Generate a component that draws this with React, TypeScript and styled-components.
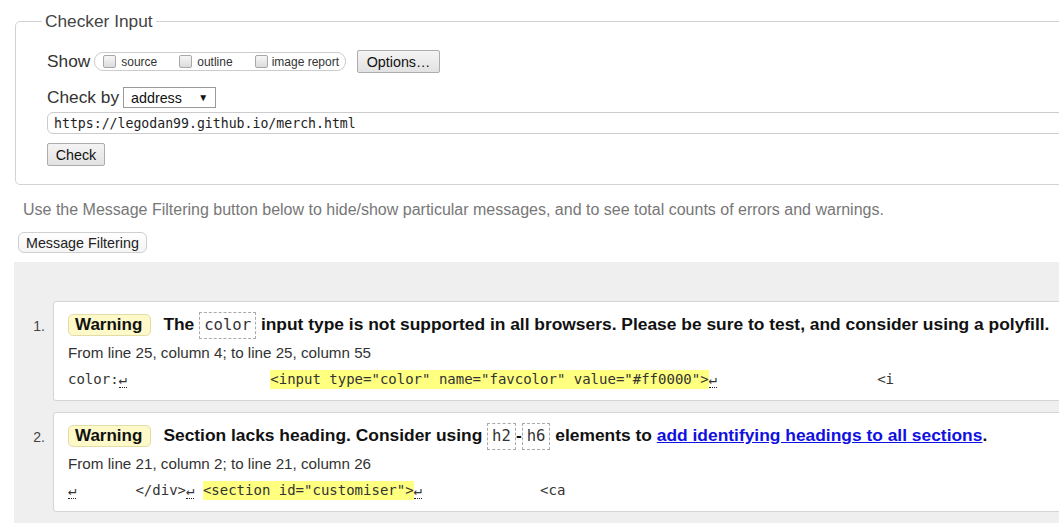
import React from 'react';
import styled, { createGlobalStyle } from 'styled-components';

const Global = createGlobalStyle`
  html, body { margin: 0; padding: 0; background: #fff; overflow: hidden; }
  body { font-family: "Liberation Sans", Arial, sans-serif; color: #222; }
  * { box-sizing: border-box; }
`;

const Page = styled.div`
  width: 1120px;
  padding: 11px 0 0 14px;
`;

const Fieldset = styled.fieldset`
  margin: 0 0 0 1px;
  padding: 19px 0 18px 31px;
  border: 1px solid #d2d2d2;
  border-radius: 5px;
  min-width: 0;
`;

const Legend = styled.legend`
  margin-left: -5px;
  padding: 0 3px;
  font-size: 17.3px;
  line-height: 20px;
  color: #444;
`;

const Row = styled.div<{ $top?: number; $h: number }>`
  display: flex;
  align-items: center;
  height: ${(p) => p.$h}px;
  margin-top: ${(p) => p.$top ?? 0}px;
  font-size: 17.3px;
  color: #333;
`;

const RowLabel = styled.span`
  margin-right: 4px;
`;

const ShowGroup = styled.div`
  display: flex;
  align-items: center;
  height: 19px;
  border: 1px solid #ccc;
  border-radius: 9px;
  padding: 0 6px 0 8px;
  font-size: 12px;
  color: #333;
`;

const CheckItem = styled.label`
  display: flex;
  align-items: flex-end;
  gap: 5px;
  margin-right: 22px;
  &:last-child { margin-right: 0; gap: 4px; }
`;

const Box = styled.input`
  appearance: none;
  margin: 0;
  width: 13px;
  height: 13px;
  border: 1px solid #a8a8a8;
  border-radius: 2px;
  background: linear-gradient(#f6f6f6, #dcdcdc);
`;

const CheckText = styled.span`
  line-height: 12px;
`;

const Button = styled.button<{ $w: number; $h: number; $top?: number }>`
  display: block;
  width: ${(p) => p.$w}px;
  height: ${(p) => p.$h}px;
  margin: ${(p) => p.$top ?? 0}px 0 0 0;
  padding: 0;
  font-family: "Liberation Sans", Arial, sans-serif;
  font-size: 14.3px;
  color: #111;
  border: 1px solid #adadad;
  border-radius: 2px;
  background: linear-gradient(#f4f4f4, #e2e2e2);
`;

const OptionsButton = styled(Button)`
  margin-left: 11px;
`;

const Select = styled.div`
  display: flex;
  align-items: center;
  justify-content: space-between;
  width: 93px;
  height: 21px;
  padding: 0 7px 0 7px;
  border: 1px solid #999;
  background: #fff;
  font-size: 14.3px;
  color: #111;
`;

const Arrow = styled.span`
  font-size: 10px;
  color: #111;
`;

const UrlInput = styled.input`
  display: block;
  width: 100%;
  height: 22px;
  margin-top: 4px;
  padding: 0 6px;
  border: 1px solid #ccc;
  border-radius: 6px;
  font-family: "DejaVu Sans Mono", monospace;
  font-size: 13.2px;
  color: #222;
  background: #fff;
  outline: none;
`;

const Intro = styled.p`
  margin: 15px 0 0 9px;
  font-size: 16px;
  line-height: 20px;
  color: #777;
`;

const FilterButton = styled.button`
  display: block;
  height: 21px;
  margin: 12px 0 0 4px;
  padding: 0 7px;
  border: 1px solid #cfcfcf;
  border-radius: 6px;
  background: linear-gradient(#ffffff, #f4f4f4);
  font-family: "Liberation Sans", Arial, sans-serif;
  font-size: 14.3px;
  color: #222;
`;

const Results = styled.ol`
  list-style: none;
  margin: 9px 0 0 0;
  padding: 39px 0 11px 0;
  background: #efefef;
`;

const Item = styled.li`
  display: flex;
  & + & { margin-top: 11px; }
`;

const Num = styled.span`
  flex: 0 0 39px;
  padding: 17px 8px 0 0;
  text-align: right;
  font-size: 14px;
  line-height: 16px;
  color: #444;
`;

const Card = styled.div`
  flex: 1;
  background: #fff;
  border: 1px solid #d4d4d4;
  border-radius: 3px;
  padding: 8px 14px 11px;
`;

const Headline = styled.div`
  height: 28px;
  line-height: 28px;
  white-space: nowrap;
  font-size: 17.4px;
  font-weight: bold;
  color: #111;
`;

const Badge = styled.span`
  display: inline-block;
  vertical-align: middle;
  height: 22px;
  line-height: 20px;
  padding: 0 8px 0 6px;
  margin-right: 12px;
  border: 1px solid #e4dca6;
  border-radius: 5px;
  background: #fdf9c8;
  font-size: 17px;
`;

const CodeBox = styled.code`
  display: inline-block;
  vertical-align: middle;
  height: 27px;
  line-height: 25px;
  padding: 0 4px;
  border: 1px dashed #aaa;
  font-family: "DejaVu Sans Mono", monospace;
  font-size: 15.6px;
  font-weight: normal;
  color: #333;
`;

const Link = styled.a`
  color: #1010e0;
  text-decoration: underline;
`;

const Location = styled.div`
  margin-top: 6px;
  font-size: 15.2px;
  line-height: 18px;
  color: #333;
  white-space: nowrap;
`;

const Extract = styled.div`
  margin-top: 8px;
  height: 19px;
  font-family: "DejaVu Sans Mono", monospace;
  font-size: 14px;
  line-height: 19px;
  white-space: pre;
  color: #333;
`;

const Mark = styled.mark`
  display: inline-block;
  line-height: 19px;
  background: #ffff80;
  color: #333;
`;

const Ret = styled.span`
  display: inline-block;
  line-height: 15px;
  border-bottom: 1px dotted #222;
`;

export default function App() {
  return (
    <>
      <Global />
      <Page>
        <Fieldset>
          <Legend>Checker Input</Legend>
          <Row $h={23}>
            <RowLabel>Show</RowLabel>
            <ShowGroup>
              <CheckItem>
                <Box type="checkbox" />
                <CheckText>source</CheckText>
              </CheckItem>
              <CheckItem>
                <Box type="checkbox" />
                <CheckText>outline</CheckText>
              </CheckItem>
              <CheckItem>
                <Box type="checkbox" />
                <CheckText>image report</CheckText>
              </CheckItem>
            </ShowGroup>
            <OptionsButton $w={83} $h={23}>Options…</OptionsButton>
          </Row>
          <Row $h={21} $top={14}>
            <RowLabel>Check by</RowLabel>
            <Select>
              <span>address</span>
              <Arrow>▼</Arrow>
            </Select>
          </Row>
          <UrlInput readOnly value="https://legodan99.github.io/merch.html" />
          <Button $w={58} $h={23} $top={9}>Check</Button>
        </Fieldset>
        <Intro>
          Use the Message Filtering button below to hide/show particular messages, and to see total counts of errors and warnings.
        </Intro>
        <FilterButton>Message Filtering</FilterButton>
        <Results>
          <Item>
            <Num>1.</Num>
            <Card>
              <Headline>
                <Badge>Warning</Badge>The <CodeBox>color</CodeBox> input type is not supported in all browsers. Please be sure to test, and consider using a polyfill.
              </Headline>
              <Location>From line 25, column 4; to line 25, column 55</Location>
              <Extract>
                {'color:'}<Ret>↵</Ret>{'                 '}<Mark>{'<input type="color" name="favcolor" value="#ff0000">'}</Mark><Ret>↵</Ret>{'                   <i'}
              </Extract>
            </Card>
          </Item>
          <Item>
            <Num>2.</Num>
            <Card>
              <Headline>
                <Badge>Warning</Badge>Section lacks heading. Consider using <CodeBox>h2</CodeBox>-<CodeBox>h6</CodeBox> elements to <Link href="#">add identifying headings to all sections</Link>.
              </Headline>
              <Location>From line 21, column 2; to line 21, column 26</Location>
              <Extract>
                <Ret>↵</Ret>{'       </div>'}<Ret>↵</Ret>{' '}<Mark>{'<section id="customiser">'}</Mark><Ret>↵</Ret>{'              <ca'}
              </Extract>
            </Card>
          </Item>
        </Results>
      </Page>
    </>
  );
}
